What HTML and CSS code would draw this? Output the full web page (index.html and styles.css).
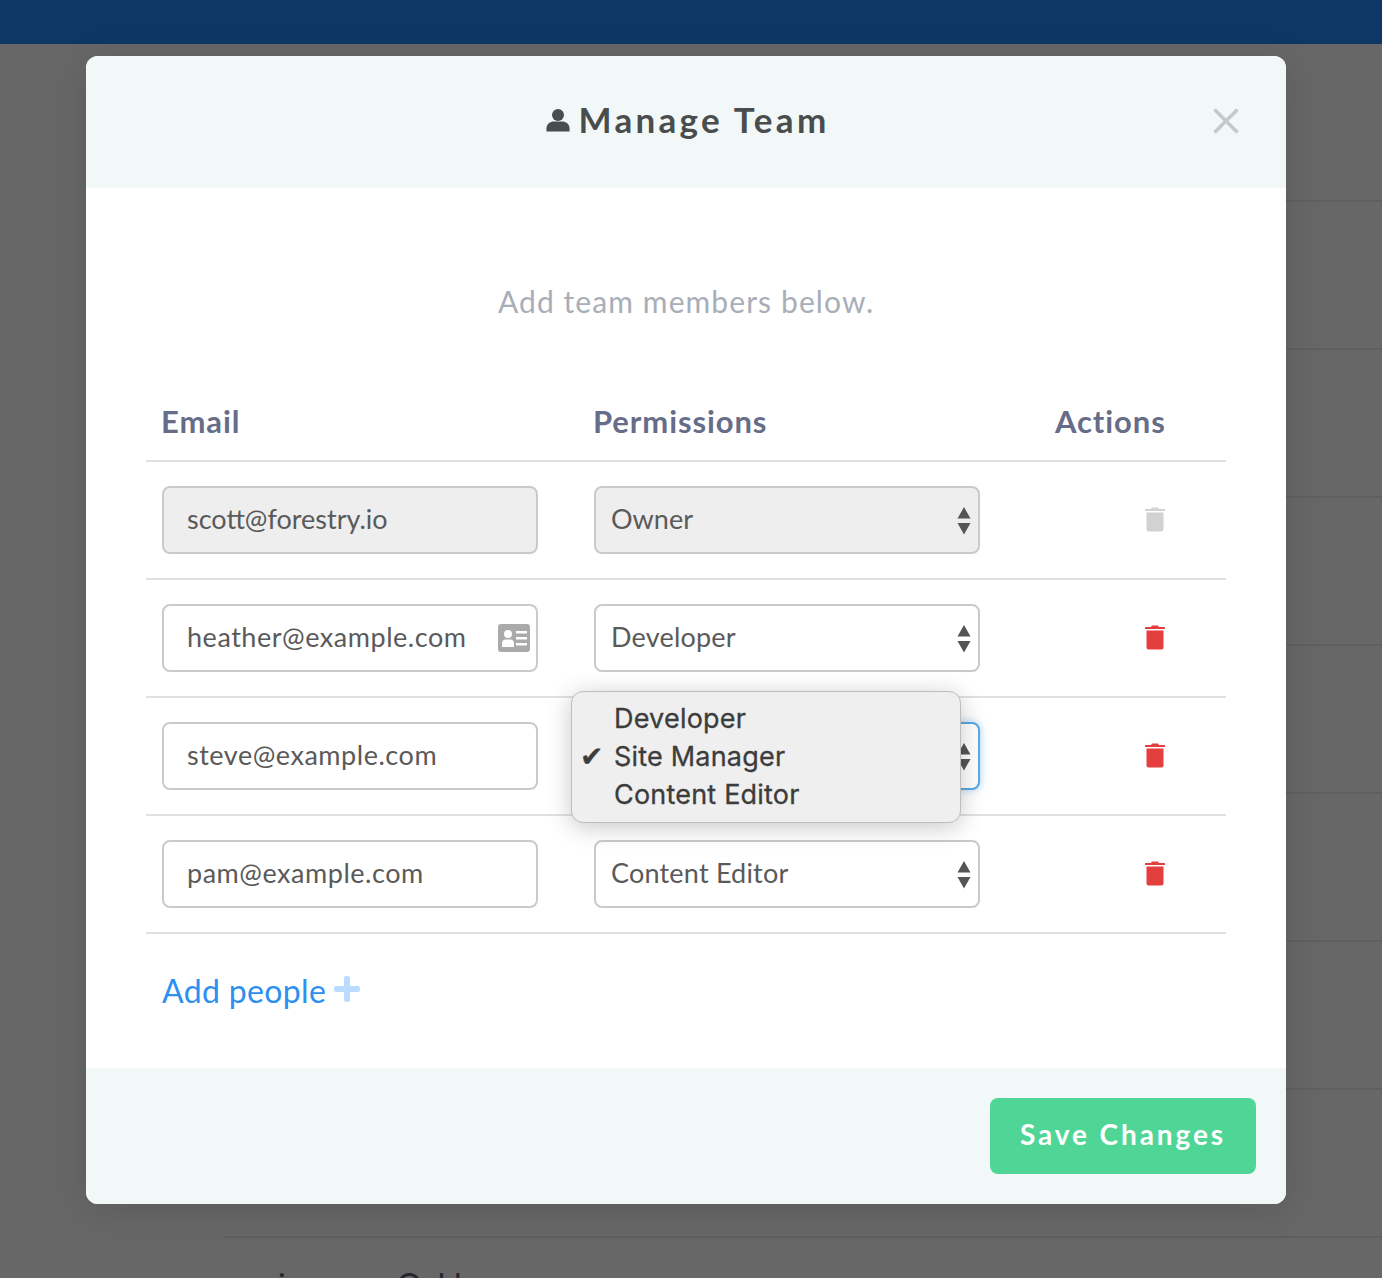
FILE: index.html
```html
<!DOCTYPE html>
<html lang="en">
<head>
<meta charset="utf-8">
<title>Manage Team</title>
<link rel="stylesheet" href="styles.css">
</head>
<body>
<div class="page">
  <div class="topbar"></div>
  <div class="bg-list">
    <div class="bg-row"></div><div class="bg-row"></div><div class="bg-row"></div><div class="bg-row"></div>
    <div class="bg-row"></div><div class="bg-row"></div><div class="bg-row"></div><div class="bg-row"></div>
  </div>
  <div class="bg-text">joanne Oakley</div>
</div>

<div class="modal">
  <header class="modal-head">
    <h1 class="title">
      <svg class="user-icon" viewBox="0 0 26 26" width="24" height="24"><circle cx="13" cy="7.5" r="6.5"/><path d="M0.5 25.5v-3.5c0-5 4-7.5 8-7.5h9c4 0 8 2.500 8 7.500v3.500z"/></svg>
      <span>Manage Team</span>
    </h1>
    <svg class="close" viewBox="0 0 26 26" width="26" height="26"><path d="M1.500 1.500l23 23M24.500 1.500l-23 23"/></svg>
  </header>

  <div class="modal-body">
    <p class="intro">Add team members below.</p>
    <div class="table">
      <div class="row head">
        <div class="cell-email">Email</div>
        <div class="cell-perm">Permissions</div>
        <div class="cell-act">Actions</div>
      </div>

      <div class="row">
        <div class="cell-email"><div class="field disabled">scott@forestry.io</div></div>
        <div class="cell-perm"><div class="select disabled">Owner<svg class="arrows" viewBox="0 0 14 28" width="14" height="28"><path d="M7 0l6.500 11.500h-13zM7 27.500l-6.500-11.500h13z"/></svg></div></div>
        <div class="cell-act"><svg class="trash muted" viewBox="0 0 20 26" width="20" height="26"><path d="M7 1.500h6l1 1.500h5.500a.5.500 0 0 1 .5.500v1.500h-20v-1.500a.5.500 0 0 1 .5-.500h5.500zM1.500 6.500h17v17a2 2 0 0 1-2 2h-13a2 2 0 0 1-2-2z"/></svg></div>
      </div>

      <div class="row">
        <div class="cell-email"><div class="field">heather@example.com
          <svg class="card-icon" viewBox="0 0 32 28" width="32" height="28"><path fill-rule="evenodd" d="M3 0h26a3 3 0 0 1 3 3v22a3 3 0 0 1-3 3H3a3 3 0 0 1-3-3V3a3 3 0 0 1 3-3zM10 6a4 4 0 1 0 0 8 4 4 0 0 0 0-8zM4 23h12v-3.500c0-2.500-1.500-4-3.500-4h-5c-2 0-3.500 1.500-3.500 4zM18 7v2.500h11V7zM18 13v2.500h11V13zM18 19v2.500h11V19z"/></svg>
        </div></div>
        <div class="cell-perm"><div class="select">Developer<svg class="arrows" viewBox="0 0 14 28" width="14" height="28"><path d="M7 0l6.500 11.500h-13zM7 27.500l-6.500-11.500h13z"/></svg></div></div>
        <div class="cell-act"><svg class="trash" viewBox="0 0 20 26" width="20" height="26"><path d="M7 1.500h6l1 1.500h5.500a.5.500 0 0 1 .5.500v1.500h-20v-1.500a.5.500 0 0 1 .5-.500h5.500zM1.500 6.500h17v17a2 2 0 0 1-2 2h-13a2 2 0 0 1-2-2z"/></svg></div>
      </div>

      <div class="row">
        <div class="cell-email"><div class="field">steve@example.com</div></div>
        <div class="cell-perm"><div class="select focused"><svg class="arrows" viewBox="0 0 14 28" width="14" height="28"><path d="M7 0l6.500 11.500h-13zM7 27.500l-6.500-11.500h13z"/></svg></div></div>
        <div class="cell-act"><svg class="trash" viewBox="0 0 20 26" width="20" height="26"><path d="M7 1.500h6l1 1.500h5.500a.5.500 0 0 1 .5.500v1.500h-20v-1.500a.5.500 0 0 1 .5-.500h5.500zM1.500 6.500h17v17a2 2 0 0 1-2 2h-13a2 2 0 0 1-2-2z"/></svg></div>
      </div>

      <div class="row">
        <div class="cell-email"><div class="field">pam@example.com</div></div>
        <div class="cell-perm"><div class="select">Content Editor<svg class="arrows" viewBox="0 0 14 28" width="14" height="28"><path d="M7 0l6.500 11.500h-13zM7 27.500l-6.500-11.500h13z"/></svg></div></div>
        <div class="cell-act"><svg class="trash" viewBox="0 0 20 26" width="20" height="26"><path d="M7 1.500h6l1 1.500h5.500a.5.500 0 0 1 .5.500v1.500h-20v-1.500a.5.500 0 0 1 .5-.500h5.500zM1.500 6.500h17v17a2 2 0 0 1-2 2h-13a2 2 0 0 1-2-2z"/></svg></div>
      </div>
    </div>

    <a class="add" href="#">Add people<svg class="plus" viewBox="0 0 26 26" width="26" height="26"><path d="M10 2a2 2 0 0 1 2-2h2a2 2 0 0 1 2 2v8h8a2 2 0 0 1 2 2v2a2 2 0 0 1-2 2h-8v8a2 2 0 0 1-2 2h-2a2 2 0 0 1-2-2v-8H2a2 2 0 0 1-2-2v-2a2 2 0 0 1 2-2h8z"/></svg></a>
  </div>

  <footer class="modal-foot">
    <button class="save" type="button">Save Changes</button>
  </footer>
</div>

<ul class="menu">
  <li>Developer</li>
  <li class="checked">Site Manager</li>
  <li>Content Editor</li>
</ul>
</body>
</html>
```
FILE: styles.css
```css
* { box-sizing: border-box; }
html, body { margin: 0; padding: 0; height: 100%; }
body {
  position: relative;
  height: 1278px;
  overflow: hidden;
  background: #676767;
  font-family: "Lato", "Open Sans", sans-serif;
  color: #555;
}
.page { height: 1278px; overflow: hidden; }
.topbar { height: 44px; background: #0e3765; }
.bg-list { padding: 10px 0 0 224px; }
.bg-row { height: 148px; border-bottom: 2px solid #5d6062; }
.bg-text {
  padding: 29px 0 0 278px;
  font-size: 32px;
  line-height: 36px;
  word-spacing: 16px;
  color: #23252f;
}

.modal {
  position: absolute;
  left: 86px;
  top: 56px;
  width: 1200px;
  height: 1148px;
  display: flex;
  flex-direction: column;
  background: #fff;
  border-radius: 12px;
  overflow: hidden;
  box-shadow: 0 6px 40px rgba(0, 0, 0, .12);
}
.modal-head {
  flex: none;
  height: 132px;
  background: #f2f8f8;
  display: flex;
  align-items: center;
  justify-content: center;
  position: relative;
}
.title {
  margin: 0 0 6px;
  padding-left: 4px;
  display: flex;
  align-items: center;
  gap: 8px;
  font-size: 35px;
  font-weight: 700;
  letter-spacing: 3.300px;
  color: #4a4d4d;
}
.user-icon { fill: #4a4d4d; flex: none; margin-top: 1px; }
.close {
  position: absolute;
  right: 47px;
  top: 52px;
  stroke: #c5c9c9;
  stroke-width: 3.500px;
  fill: none;
}

.modal-body { flex: 1; padding: 0 60px; }
.intro {
  margin: 93px 0 0;
  height: 40px;
  line-height: 40px;
  text-align: center;
  font-size: 30px;
  letter-spacing: 1.100px;
  color: #a8aeb8;
}
.table { margin-top: 63px; }
.row {
  display: grid;
  grid-template-columns: 432px 462px 1fr;
  height: 118px;
  padding: 0 16px;
  align-items: center;
  border-bottom: 2px solid #e0e2e2;
}
.row.head {
  height: 78px;
  align-items: start;
  font-size: 31px;
  font-weight: 700;
  letter-spacing: .9px;
  color: #656d88;
  line-height: 40px;
  padding-top: 17px;
}
.head .cell-email { margin-left: -1px; }
.head .cell-perm { margin-left: -1px; }
.head .cell-act { margin-left: -1px; }

.field, .select {
  position: relative;
  height: 68px;
  display: flex;
  align-items: center;
  border: 2px solid #cacaca;
  border-radius: 8px;
  background: #fff;
  font-size: 27px;
  color: #5a5a5a;
  padding-bottom: 4px;
}
.field { width: 376px; padding-left: 23px; letter-spacing: .53px; }
.select { width: 386px; padding-left: 15px; letter-spacing: .2px; }
.field.disabled, .select.disabled { background: #eeeeee; letter-spacing: 0; }
.focused {
  border-color: #5aa9e6;
  box-shadow: 0 0 8px rgba(90, 169, 230, .5);
}
.arrows { position: absolute; right: 7px; top: 19px; fill: #555; }
.card-icon { position: absolute; right: 6px; top: 18px; fill: #aaa; }

.cell-act { display: flex; justify-content: flex-end; padding-right: 45px; }
.head .cell-act { justify-content: flex-start; padding: 0; }
.trash { fill: #e53e3e; margin-bottom: 2px; }
.trash.muted { fill: #d2d2d2; }

.add {
  display: inline-flex;
  align-items: center;
  gap: 8px;
  margin: 34px 0 0 16px;
  height: 44px;
  font-size: 32px;
  letter-spacing: .35px;
  color: #2d8ff0;
  text-decoration: none;
}
.plus { fill: #bcdcff; margin-top: -2px; }

.modal-foot {
  flex: none;
  height: 136px;
  background: #f2f8f8;
  display: flex;
  justify-content: flex-end;
  align-items: center;
  padding-right: 30px;
}
.save {
  width: 266px;
  height: 76px;
  padding: 0 0 4px;
  border: 0;
  border-radius: 8px;
  background: #4fd696;
  color: #fff;
  font-family: inherit;
  font-size: 28px;
  font-weight: 700;
  letter-spacing: 2.900px;
}

.menu {
  position: absolute;
  left: 571px;
  top: 691px;
  width: 390px;
  height: 132px;
  margin: 0;
  padding: 8px 0;
  list-style: none;
  background: #efefef;
  border: 1px solid #bdbdbd;
  border-radius: 12px;
  box-shadow: 0 4px 24px rgba(0, 0, 0, .22);
  font-family: "Inter", "Roboto", sans-serif;
  font-size: 27px;
  letter-spacing: .2px;
  -webkit-text-stroke: .3px #3c3c3c;
  color: #3c3c3c;
}
.menu li {
  position: relative;
  height: 38px;
  line-height: 38px;
  padding-left: 42px;
}
.checked::before {
  content: "✔";
  position: absolute;
  left: 8px;
  font-family: "DejaVu Sans", sans-serif;
  font-size: 28px;
}
```
